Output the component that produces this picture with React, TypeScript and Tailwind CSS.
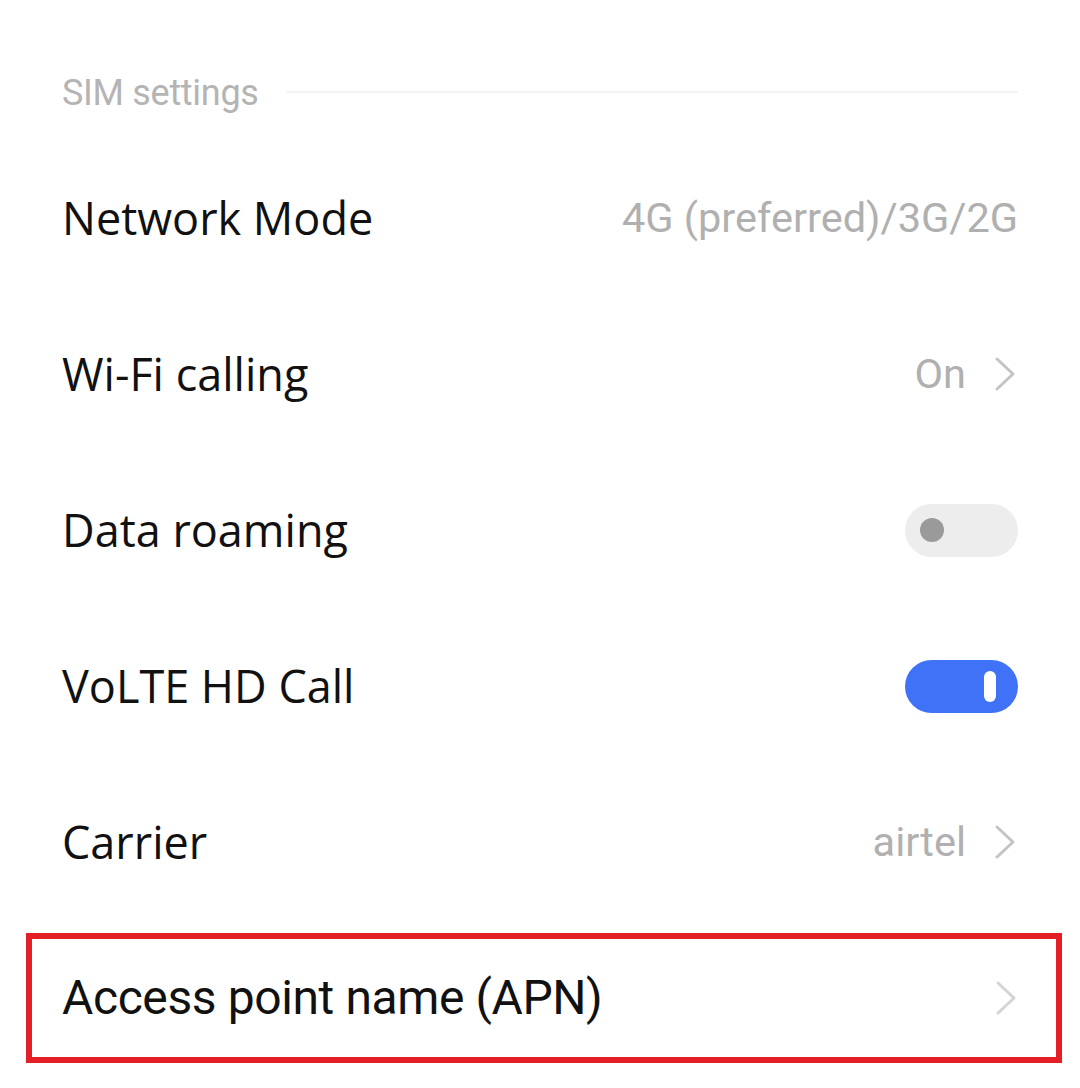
type Row = {
  label: string;
  value?: string;
  kind: 'text' | 'link' | 'off' | 'on';
};

const rows: Row[] = [
  { label: 'Network Mode', value: '4G (preferred)/3G/2G', kind: 'text' },
  { label: 'Wi-Fi calling', value: 'On', kind: 'link' },
  { label: 'Data roaming', kind: 'off' },
  { label: 'VoLTE HD Call', kind: 'on' },
  { label: 'Carrier', value: 'airtel', kind: 'link' },
];

function Chevron({ color = '#c4c4c4' }: { color?: string }) {
  return (
    <svg width="26" height="36" viewBox="0 0 26 36" className="shrink-0">
      <path d="M5 3 L21 18 L5 33" fill="none" stroke={color} strokeWidth="3" strokeLinecap="round" strokeLinejoin="round" />
    </svg>
  );
}

function Toggle({ on }: { on: boolean }) {
  if (on) {
    return (
      <div className="w-[113px] h-[53px] rounded-full bg-[#3f72f7] flex items-center justify-end pr-[22px]">
        <div className="w-[12px] h-[31px] rounded-full bg-white" />
      </div>
    );
  }
  return (
    <div className="w-[113px] h-[53px] rounded-full bg-[#ededed] flex items-center pl-[15px]">
      <div className="w-[24px] h-[24px] rounded-full bg-[#9a9a9a]" />
    </div>
  );
}

export default function App() {
  return (
    <div className="w-[1080px] h-[1088px] bg-white overflow-hidden font-['Roboto',sans-serif]">
      {/* Section header */}
      <div className="h-[140px] px-[62px] pt-[72px] flex items-start gap-[28px]">
        <span className="text-[36px] leading-[42px] text-[#b4b4b4] tracking-[-0.3px]">SIM settings</span>
        <div className="flex-1 h-[2px] bg-[#f3f3f3] mt-[19px]" />
      </div>

      {rows.map((r) => (
        <div key={r.label} className="h-[156px] px-[62px] flex items-center justify-between">
          <span className="font-['Open_Sans',sans-serif] text-[45px] text-[#111111]">{r.label}</span>
          <div className="flex items-center gap-[26px]">
            {r.value && <span className="text-[41.5px] text-[#b0b0b0]">{r.value}</span>}
            {r.kind === 'link' && <Chevron />}
            {r.kind === 'off' && <Toggle on={false} />}
            {r.kind === 'on' && <Toggle on={true} />}
          </div>
        </div>
      ))}

      {/* Highlighted row */}
      <div className="ml-[26px] mr-[18px] mt-[13px] h-[130px] border-[6px] border-[#e31e25] pl-[30px] pr-[37px] flex items-center justify-between">
        <span className="text-[48px] text-[#111111] tracking-[-0.4px]">Access point name (APN)</span>
        <Chevron color="#d4d4d4" />
      </div>
    </div>
  );
}
